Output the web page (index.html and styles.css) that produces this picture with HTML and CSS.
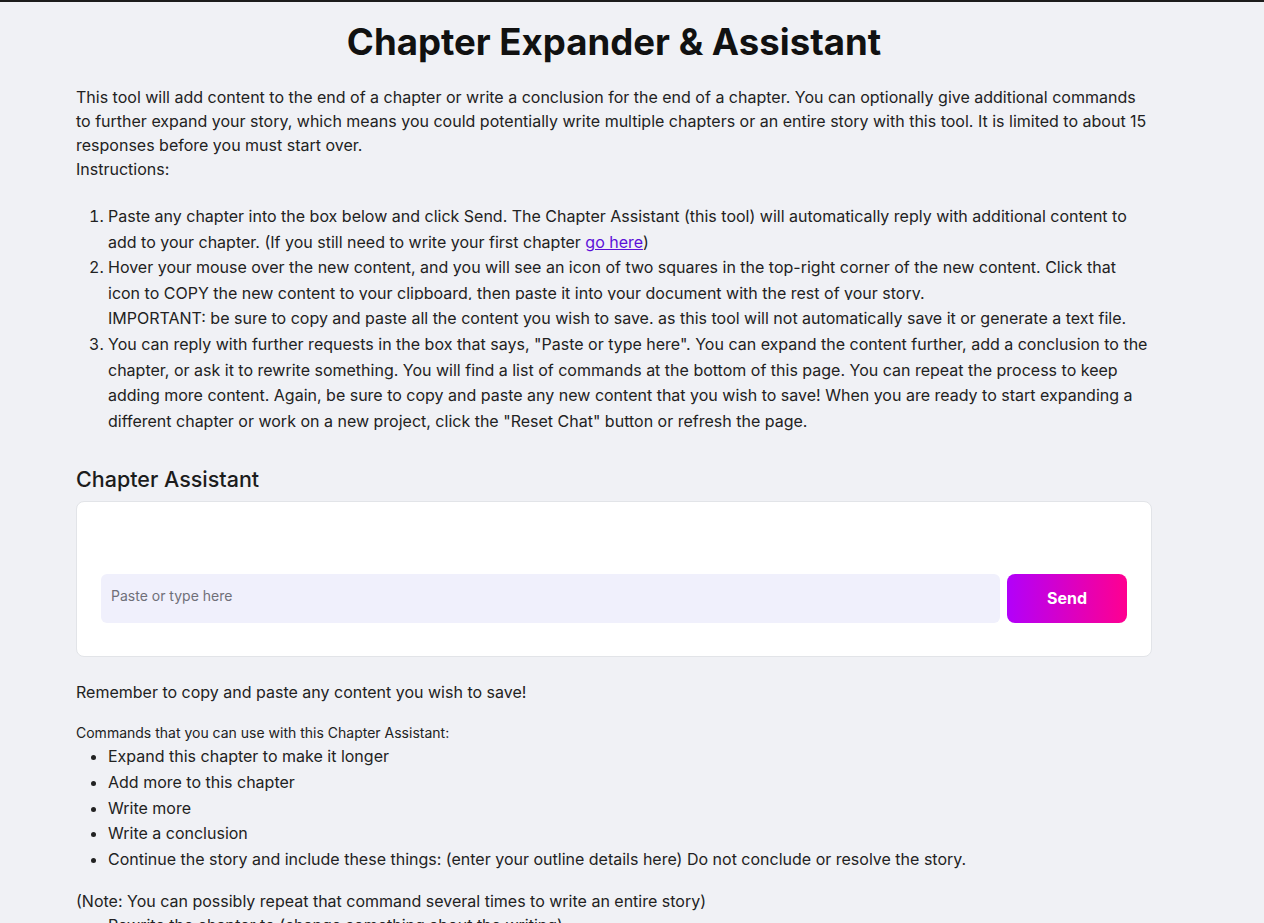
FILE: index.html
```html
<!DOCTYPE html>
<html lang="en">
<head>
<meta charset="utf-8">
<title>Chapter Expander &amp; Assistant</title>
<link rel="stylesheet" href="styles.css">
</head>
<body>
<div class="page">
  <h1 class="title">Chapter Expander &amp; Assistant</h1>
  <p class="intro">This tool will add content to the end of a chapter or write a conclusion for the end of a chapter. You can optionally give additional commands to further expand your story, which means you could potentially write multiple chapters or an entire story with this tool. It is limited to about 15 responses before you must start over.<br>Instructions:</p>
  <ol class="steps">
    <li>Paste any chapter into the box below and click Send. The Chapter Assistant (this tool) will automatically reply with additional content to add to your chapter. (If you still need to write your first chapter <a class="link" href="#">go here</a>)</li>
    <li>Hover your mouse over the new content, and you will see an icon of two squares in the top-right corner of the new content. Click that icon to COPY the new content to your clipboard, then paste it into your document with the rest of your story.
      <div class="important">IMPORTANT: be sure to copy and paste all the content you wish to save. as this tool will not automatically save it or generate a text file.</div></li>
    <li>You can reply with further requests in the box that says, "Paste or type here". You can expand the content further, add a conclusion to the chapter, or ask it to rewrite something. You will find a list of commands at the bottom of this page. You can repeat the process to keep adding more content. Again, be sure to copy and paste any new content that you wish to save! When you are ready to start expanding a different chapter or work on a new project, click the "Reset Chat" button or refresh the page.</li>
  </ol>

  <h2 class="section-title">Chapter Assistant</h2>
  <div class="chat-card">
    <div class="messages"></div>
    <div class="input-row">
      <textarea class="chat-input" placeholder="Paste or type here"></textarea>
      <button class="send-btn" type="button">Send</button>
    </div>
  </div>

  <p class="reminder">Remember to copy and paste any content you wish to save!</p>
  <p class="commands-label">Commands that you can use with this Chapter Assistant:</p>
  <ul class="commands">
    <li>Expand this chapter to make it longer</li>
    <li>Add more to this chapter</li>
    <li>Write more</li>
    <li>Write a conclusion</li>
    <li>Continue the story and include these things: (enter your outline details here) Do not conclude or resolve the story.</li>
  </ul>
  <p class="note">(Note: You can possibly repeat that command several times to write an entire story)</p>
  <ul class="commands">
    <li>Rewrite the chapter to (change something about the writing)</li>
  </ul>
</div>
</body>
</html>
```

FILE: styles.css
```css
html, body {
  margin: 0;
  padding: 0;
}

body {
  background: #f0f1f5;
  color: #222222;
  font-family: Inter, "Noto Sans", "Liberation Sans", sans-serif;
  font-size: 16px;
  border-top: 2px solid #1c1c1c;
}

.page {
  width: 1076px;
  margin-left: 76px;
}

.title {
  margin: 16px 0 19px;
  font-size: 36.6px;
  line-height: 48px;
  font-weight: 700;
  text-align: center;
  color: #111111;
}

.intro {
  margin: 0;
  line-height: 24px;
}

.steps {
  margin: 23px 0 0;
  padding-left: 32px;
  line-height: 25.6px;
}

.link {
  color: #5c10d8;
}

.important {
  position: relative;
  background: #f0f1f5;
  margin-top: -6px;
  padding-top: 6px;
}

.section-title {
  margin: 31px 0 8px;
  font-size: 21.5px;
  line-height: 28px;
  font-weight: 500;
  color: #1c1c1c;
}

.chat-card {
  background: #ffffff;
  border: 1px solid #e2e4e8;
  border-radius: 8px;
  padding: 24px 24px 33px;
}

.messages {
  height: 48px;
}

.input-row {
  display: flex;
  gap: 7px;
  align-items: stretch;
}

.chat-input {
  flex: 1;
  height: 49px;
  box-sizing: border-box;
  border: none;
  border-radius: 6px;
  background: #f0f0fc;
  padding: 12px 10px 14px;
  font-family: Inter, "Noto Sans", sans-serif;
  font-size: 14px;
  line-height: 20px;
  color: #222222;
  resize: none;
  outline: none;
}

.chat-input::placeholder {
  color: #6f6f78;
}

.send-btn {
  width: 120px;
  height: 49px;
  padding: 0 0 2px;
  border: none;
  border-radius: 8px;
  background: linear-gradient(90deg, #b200fa 0%, #ff0090 100%);
  color: #ffffff;
  font-family: Inter, "Noto Sans", sans-serif;
  font-size: 16px;
  font-weight: 700;
  cursor: pointer;
}

.reminder {
  margin: 23px 0 0;
  line-height: 24px;
}

.commands-label {
  margin: 18px 0 0;
  font-size: 14px;
  line-height: 22px;
}

.commands {
  margin: 0;
  padding-left: 32px;
  line-height: 25.6px;
}

.note {
  margin: 17px 0 0;
  line-height: 24px;
}
```
